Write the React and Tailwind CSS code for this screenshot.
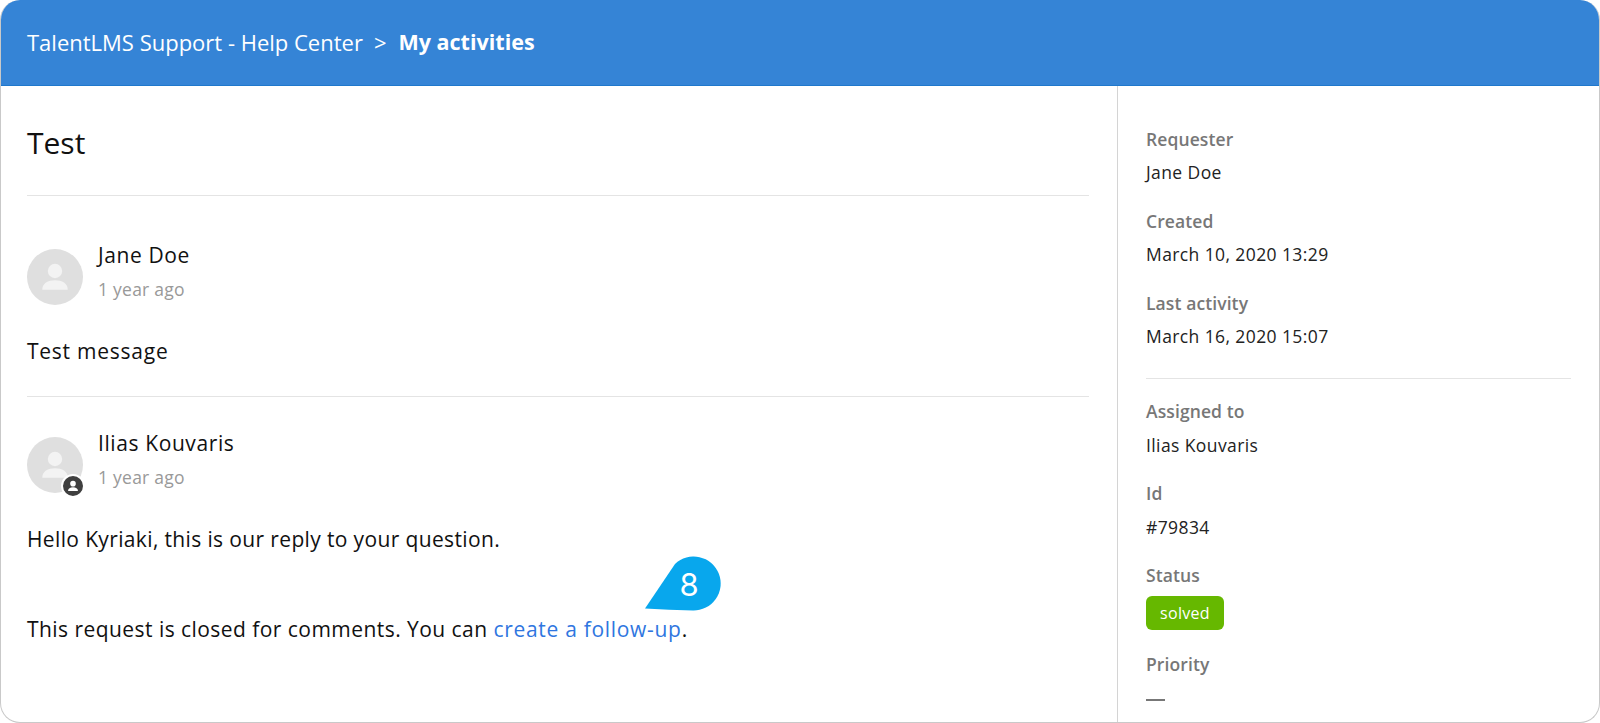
const F = "font-['Open_Sans','Lato',sans-serif]";

function Person({ className = "" }) {
  return (
    <svg viewBox="0 0 24 24" className={className} fill="currentColor">
      <circle cx="12" cy="8" r="4.8" />
      <path d="M3.5 20.5c0-4.2 3.8-6.3 8.5-6.3s8.5 2.1 8.5 6.3z" />
    </svg>
  );
}

function Avatar({ agent }) {
  return (
    <div className="relative w-14 h-14 rounded-full bg-[#dfdfdf] flex items-center justify-center text-[#f3f3f3] shrink-0">
      <Person className="w-9 h-9" />
      {agent && (
        <div className="absolute right-[-2px] bottom-[-5px] w-[24px] h-[24px] rounded-full bg-[#3f3f3f] border-2 border-white flex items-center justify-center text-white">
          <Person className="w-[14px] h-[14px]" />
        </div>
      )}
    </div>
  );
}

function Author({ name, agent }) {
  return (
    <div className="flex gap-[15px]">
      <Avatar agent={agent} />
      <div className="flex flex-col">
        <div className="text-[21px] leading-[26px] mt-[-7px] tracking-[0.6px] text-[#111]">{name}</div>
        <div className="text-[17.5px] leading-[22px] mt-[10px] tracking-[0.25px] text-[#999]">1 year ago</div>
      </div>
    </div>
  );
}

function Label({ children }) {
  return <div className="text-[17.5px] leading-[22px] font-semibold tracking-[0.1px] text-[#777]">{children}</div>;
}

function Field({ label, children, className = "" }) {
  return (
    <div className={className}>
      <Label>{label}</Label>
      <div className="text-[17.5px] leading-[22px] mt-[11px] tracking-[0.4px] text-[#222]">{children}</div>
    </div>
  );
}

function LowField({ label, children, className = "" }) {
  return (
    <div className={className}>
      <Label>{label}</Label>
      <div className="text-[17.5px] leading-[22px] mt-[12px] tracking-[0.4px] text-[#222]">{children}</div>
    </div>
  );
}

export default function App() {
  return (
    <div className={`w-[1600px] h-[723px] bg-white overflow-hidden ${F}`}>
      <div className="h-full rounded-[20px] border border-t-0 border-[#c9c9c9] overflow-hidden flex flex-col">
        <header className="h-[86px] shrink-0 bg-[#3584d6] border-b border-[#1f78cc] flex items-center pl-[26px] text-white text-[22px]">
          <span>TalentLMS Support - Help Center</span>
          <span className="ml-[11px]">&gt;</span>
          <span className="ml-[12px] text-[21.5px] font-bold">My activities</span>
        </header>
        <div className="flex flex-1 min-h-0">
          <main className="w-[1117px] shrink-0 pl-[26px] pr-[28px] border-r border-[#d4d4d4] relative">
            <h1 className="text-[30px] leading-[40px] mt-[37px] text-[#111]">Test</h1>
            <div className="h-px bg-[#e4e4e4] mt-[32px]" />
            <div className="mt-[53px]">
              <Author name="Jane Doe" />
            </div>
            <p className="text-[21px] leading-[28px] mt-[32px] tracking-[0.75px] text-[#111]">Test message</p>
            <div className="h-px bg-[#e4e4e4] mt-[31px]" />
            <div className="mt-[40px]">
              <Author name="Ilias Kouvaris" agent />
            </div>
            <p className="text-[21px] leading-[28px] mt-[32px] tracking-[0.36px] text-[#111]">Hello Kyriaki, this is our reply to your question.</p>
            <p className="text-[21px] leading-[28px] mt-[62px] tracking-[0.45px] text-[#111]">
              This request is closed for comments. You can{" "}
              <span className="text-[#2f76e0] tracking-[0.7px]">create a follow-up</span>.
            </p>
            <div className="absolute left-[644px] top-[470px] w-[76px] h-[56px] flex items-center justify-center">
              <svg viewBox="0 0 76 56" className="absolute inset-0 w-full h-full">
                <path d="M0 52.5L30 8A27 27 0 1 1 48 54.5C32 54 16 53.5 0 52.5Z" fill="#08a7ed" />
              </svg>
              <span className="relative text-white text-[31px] leading-none ml-[12px] mt-[1px] font-['Inter',sans-serif]">8</span>
            </div>
          </main>
          <aside className="flex-1 pl-[28px] pr-[28px] pt-[42px]">
            <Field label="Requester">Jane Doe</Field>
            <Field label="Created" className="mt-[27px]">March 10, 2020 13:29</Field>
            <Field label="Last activity" className="mt-[27px]">March 16, 2020 15:07</Field>
            <div className="h-px bg-[#e4e4e4] mt-[31px]" />
            <LowField label="Assigned to" className="mt-[21px]">Ilias Kouvaris</LowField>
            <LowField label="Id" className="mt-[26px]">#79834</LowField>
            <div className="mt-[26px]">
              <Label>Status</Label>
              <div className="mt-[10px] w-[78px] h-[34px] rounded-[6px] bg-[#66b800] text-white text-[16px] tracking-[0.3px] flex items-center justify-center">solved</div>
            </div>
            <div className="mt-[23px]">
              <Label>Priority</Label>
              <div className="w-[19px] h-[2px] bg-[#777] mt-[24px]" />
            </div>
          </aside>
        </div>
      </div>
    </div>
  );
}
